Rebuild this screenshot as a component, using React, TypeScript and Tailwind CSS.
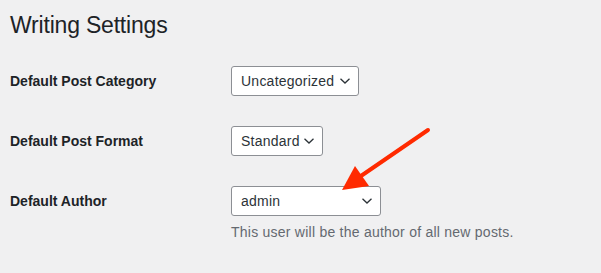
import React from "react";

type Row = {
  label: string;
  value: string;
  width: string;
  description?: string;
};

const rows: Row[] = [
  { label: "Default Post Category", value: "Uncategorized", width: "w-[128px]" },
  { label: "Default Post Format", value: "Standard", width: "w-[92px]" },
  {
    label: "Default Author",
    value: "admin",
    width: "w-[150px]",
    description: "This user will be the author of all new posts.",
  },
];

function Chevron() {
  return (
    <svg width="12" height="8" viewBox="0 0 12 8" className="shrink-0">
      <path d="M1.5 1.8 L6 6 L10.5 1.8" fill="none" stroke="#2c3338" strokeWidth="1.3" />
    </svg>
  );
}

function SelectBox({ value, width }: { value: string; width: string }) {
  return (
    <div
      className={`${width} h-[30px] flex items-center justify-between pl-[9px] pr-[7px] bg-white border border-[#8c8f94] rounded-[3px] text-[14px] tracking-[0.24px] text-[#2c3338]`}
    >
      <span>{value}</span>
      <Chevron />
    </div>
  );
}

export default function App() {
  return (
    <div className="relative w-[601px] h-[273px] overflow-hidden bg-[#f0f0f1] pl-[10px] font-['Liberation_Sans',Arial,sans-serif]">
      <h1 className="pt-[10px] text-[23px] leading-[30px] font-normal tracking-[-0.2px] text-[#1d2327]">
        Writing Settings
      </h1>

      <div className="mt-[11px] flex flex-col">
        {rows.map((row) => (
          <div key={row.label} className="flex items-start h-[60px] pt-[15px]">
            <div className="w-[221px] h-[30px] flex items-center text-[14px] font-bold text-[#1d2327]">
              {row.label}
            </div>
            <div className="flex flex-col">
              <SelectBox value={row.value} width={row.width} />
              {row.description && (
                <p className="mt-[6px] text-[14px] leading-[20px] tracking-[0.24px] text-[#646970]">
                  {row.description}
                </p>
              )}
            </div>
          </div>
        ))}
      </div>

      {/* annotation arrow */}
      <svg className="absolute left-0 top-0 pointer-events-none" width="601" height="273">
        <line x1="428" y1="130" x2="358" y2="178" stroke="#ff2a00" strokeWidth="4" strokeLinecap="round" />
        <polygon points="342,190 355,166 369,186" fill="#ff2a00" />
      </svg>
    </div>
  );
}
